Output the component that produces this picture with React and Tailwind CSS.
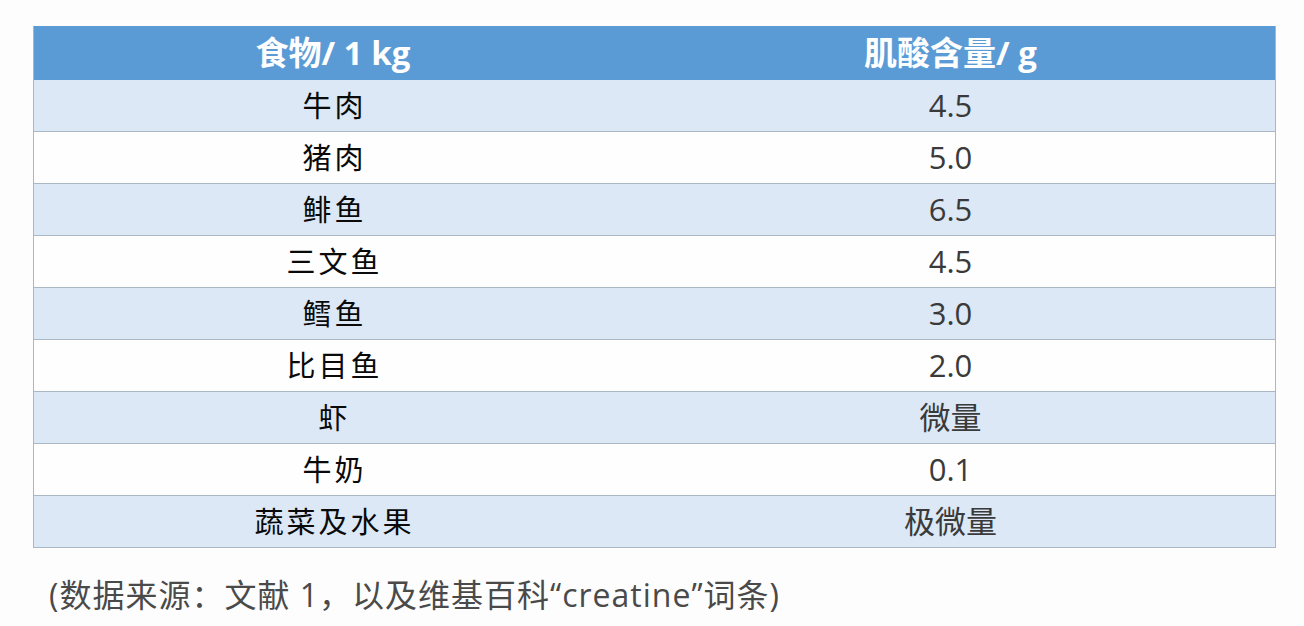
const rows = [
  ["牛肉", "4.5"],
  ["猪肉", "5.0"],
  ["鲱鱼", "6.5"],
  ["三文鱼", "4.5"],
  ["鳕鱼", "3.0"],
  ["比目鱼", "2.0"],
  ["虾", "微量"],
  ["牛奶", "0.1"],
  ["蔬菜及水果", "极微量"],
];

export default function App() {
  return (
    <div
      className="w-[1304px] h-[626px] bg-[#fdfdfd] pt-[26px] pl-[33px]"
      style={{ fontFamily: '"Open Sans", "Noto Sans CJK SC", sans-serif' }}
    >
      <div className="w-[1243px] border border-[#a9b6c4] border-t-0">
        <div className="flex h-[54px] bg-[#5b9bd5] text-white font-bold text-[33px] items-center">
          <div className="w-[598px] text-center">食物/ 1 kg</div>
          <div className="flex-1 text-center pr-[6px]">肌酸含量/ g</div>
        </div>
        {rows.map(([a, b], i) => (
          <div
            key={i}
            className={`flex items-center ${i === 0 ? "h-[51px]" : "h-[52px] border-t border-[#a9b6c4]"} ${
              i % 2 === 0 ? "bg-[#dce8f6]" : "bg-[#fefeff]"
            }`}
          >
            <div className="w-[598px] text-center text-[29px] tracking-[3px] text-[#0a0a0a] font-normal pl-[3px]">
              {a}
            </div>
            <div className="flex-1 text-center text-[31px] text-[#3a3a3a] pr-[6px]">{b}</div>
          </div>
        ))}
      </div>
      <div className="mt-[28px] ml-[16px] text-[32px] text-[#4a4a4a] leading-[38px] tracking-[1px]">
        (数据来源：文献 1，以及维基百科“creatine”词条)
      </div>
    </div>
  );
}
